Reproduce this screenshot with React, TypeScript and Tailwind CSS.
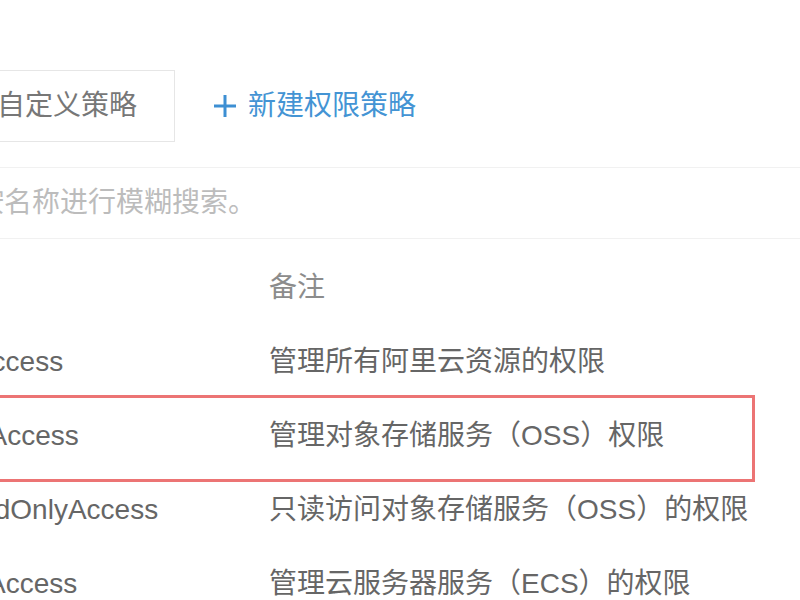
const font = {
  fontFamily: "'Liberation Sans', 'Noto Sans CJK SC', sans-serif",
};

type Policy = {
  name: string;
  note: string;
  marked?: boolean;
};

const policies: Policy[] = [
  { name: "AdministratorAccess", note: "管理所有阿里云资源的权限" },
  { name: "AliyunOSSFullAccess", note: "管理对象存储服务（OSS）权限", marked: true },
  { name: "AliyunOSSReadOnlyAccess", note: "只读访问对象存储服务（OSS）的权限" },
  { name: "AliyunECSFullAccess", note: "管理云服务器服务（ECS）的权限" },
];

function PlusIcon() {
  return (
    <svg width="24" height="24" viewBox="0 0 24 24" className="shrink-0">
      <path d="M12 1v22M1 12h22" stroke="#3d8fd3" strokeWidth="3" />
    </svg>
  );
}

export default function App() {
  return (
    <div
      className="relative h-[600px] w-[800px] overflow-hidden bg-white text-[28px] leading-none"
      style={font}
    >
      {/* tabs + create */}
      <div className="mt-[70px] flex h-[72px] items-center">
        <div className="-ml-[43px] flex h-full items-center border border-[#e6e6e6] pl-[39px] pr-[37px] text-[#777]">
          自定义策略
        </div>
        <div className="ml-[38px] flex items-center gap-[11px] text-[#4494d4]">
          <PlusIcon />
          <span>新建权限策略</span>
        </div>
      </div>

      {/* search */}
      <div className="mt-[25px] flex h-[72px] items-center border-y border-[#f1f1f1]">
        <span className="-ml-[24px] text-[#bcbcbc]">按名称进行模糊搜索。</span>
      </div>

      {/* table */}
      <div className="mt-[12px] -ml-[192px]">
        <div className="grid h-[74px] grid-cols-[461px_1fr] items-center">
          <span />
          <span className="text-[#8c8c8c]">备注</span>
        </div>
        {policies.map((p) => (
          <div
            key={p.name}
            className="relative grid h-[74px] grid-cols-[461px_1fr] items-center text-[#666]"
          >
            <span className="whitespace-nowrap">{p.name}</span>
            <span className="whitespace-nowrap">{p.note}</span>
            {p.marked && (
              <div className="pointer-events-none absolute -top-[4px] left-[182px] h-[87px] w-[765px] border-[3px] border-[#ec7474]" />
            )}
          </div>
        ))}
      </div>
    </div>
  );
}
